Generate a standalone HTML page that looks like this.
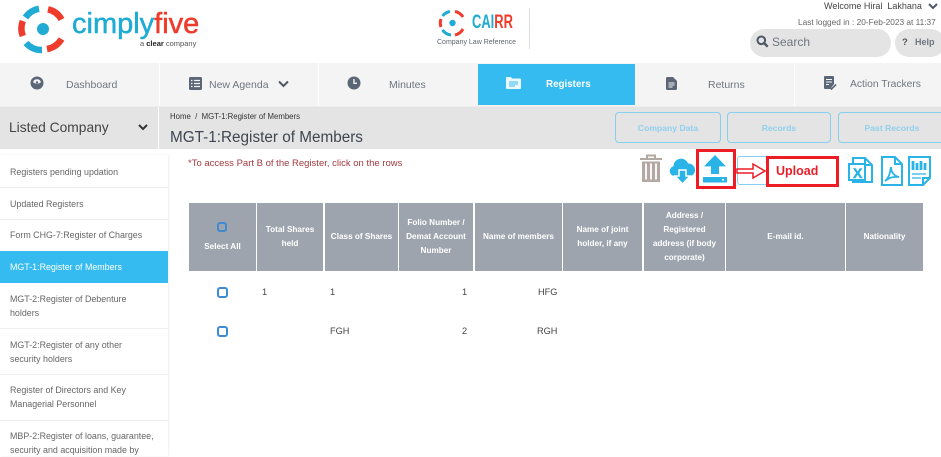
<!DOCTYPE html>
<html><head><meta charset="utf-8"><style>
html,body{margin:0;padding:0}
body{width:941px;height:456px;overflow:hidden;background:#fff;position:relative;font-family:"Liberation Sans",sans-serif;color:#555}
.a{position:absolute}
.t{position:absolute;white-space:nowrap;line-height:1}
.n{color:#6f7680;font-size:10.5px;top:79px}
.h{position:absolute;top:203px;height:68px;background:#9ea4ae;color:#fff;font-size:8.200px;font-weight:bold;line-height:14px;display:flex;align-items:center;justify-content:center;text-align:center}
.s{position:absolute;left:10px;width:156px;font-size:8.900px;line-height:14px;color:#666;white-space:nowrap}
.l{position:absolute;left:0;width:168px;height:1px;background:#f0f0f0}
.b{position:absolute;top:112px;height:29px;border:1.5px solid #86cfee;border-radius:4px;color:#8fd0ee;font-size:8.600px;font-weight:bold;display:flex;align-items:center;justify-content:center;box-sizing:content-box}
.c{position:absolute;width:7px;height:7px;border:2px solid #3f8ad0;border-radius:3px}
.d{position:absolute;font-size:9.200px;color:#444;line-height:1}
</style></head><body>
<svg class="a" style="left:17px;top:4px" width="50" height="50" viewBox="0 0 50 50" fill="none">
<circle cx="26" cy="25" r="6" fill="#1fabd4"/>
<g stroke-width="6.500">
<path d="M8.500 13.500A20.500 20.500 0 0 1 22 4.800" stroke="#1fabd4"/>
<path d="M31 5.300A20.500 20.500 0 0 1 44.500 15.500" stroke="#ee3b2b"/>
<path d="M5.800 32A21 21 0 0 1 5.800 17" stroke="#ee3b2b"/>
<path d="M9 39A21 21 0 0 0 25 46" stroke="#1fabd4"/>
<path d="M30 45A21 21 0 0 0 44.500 35" stroke="#ee3b2b"/>
</g></svg>
<div class="t" style="left:72px;top:10px;font-size:29px;color:#1fabd4;-webkit-text-stroke:.5px #1fabd4">cimply<span style="color:#ee3b2b;-webkit-text-stroke:.5px #ee3b2b">five</span></div>
<div class="t" style="left:140px;top:40px;font-size:7.500px;color:#555">a <b style="color:#222">clear</b> company</div>

<svg class="a" style="left:438px;top:9px" width="29" height="29" viewBox="0 0 29 29" fill="none">
<circle cx="14.500" cy="14" r="3.200" fill="#1fabd4"/>
<g stroke-width="3">
<path d="M4.500 7A12 12 0 0 1 12 2.500" stroke="#1fabd4"/>
<path d="M17 2.500A12 12 0 0 1 25 8" stroke="#ee3b2b"/>
<path d="M3 18A12 12 0 0 1 3 10" stroke="#ee3b2b"/>
<path d="M4.500 21A12 12 0 0 0 13 26" stroke="#1fabd4"/>
<path d="M17 26A12 12 0 0 0 25 20" stroke="#ee3b2b"/>
</g></svg>
<div class="t" style="left:472px;top:13px;font-size:19px;font-weight:bold;color:#1fabd4;transform:scaleX(.68);transform-origin:left">CAI<span style="color:#ee3b2b">RR</span></div>
<div class="t" style="left:437px;top:39px;font-size:7px;color:#5f6670">Company Law Reference</div>
<div class="a" style="left:529px;top:8px;width:1px;height:41px;background:#dcdcdc"></div>

<div class="t" style="left:824px;top:2px;font-size:9px;color:#444">Welcome Hiral&nbsp; Lakhana</div>
<svg class="a" style="left:928px;top:3px" width="10" height="7" viewBox="0 0 10 7" fill="none"><path d="M1 1l4 4 4-4" stroke="#4d5766" stroke-width="2"/></svg>
<div class="t" style="left:798px;top:18px;font-size:8.300px;color:#666">Last logged in : 20-Feb-2023 at 11:37</div>
<div class="a" style="left:750px;top:29px;width:141px;height:28px;border-radius:14px;background:#e4e4e4"></div>
<svg class="a" style="left:756px;top:35px" width="13" height="13" viewBox="0 0 13 13" fill="none"><circle cx="5.300" cy="5.300" r="3.800" stroke="#4d5766" stroke-width="2"/><path d="M8 8l3.700 3.700" stroke="#4d5766" stroke-width="2.400"/></svg>
<div class="t" style="left:772px;top:36px;font-size:12px;color:#6f7680">Search</div>
<div class="a" style="left:895px;top:29px;width:50px;height:28px;border-radius:14px;background:#e4e4e4"></div>
<div class="t" style="left:902px;top:38px;font-size:9.500px;font-weight:bold;color:#555">?</div>
<div class="t" style="left:915px;top:38px;font-size:9px;font-weight:bold;color:#6f7680">Help</div>

<div class="a" style="left:0;top:63px;width:941px;height:43px;background:#f4f4f4"></div>
<div class="a" style="left:0;top:106px;width:941px;height:1px;background:#ededed"></div>
<div class="a" style="left:159px;top:63px;width:1px;height:43px;background:#fff"></div>
<div class="a" style="left:318px;top:63px;width:1px;height:43px;background:#fff"></div>
<div class="a" style="left:794px;top:63px;width:1px;height:43px;background:#fff"></div>
<div class="a" style="left:478px;top:64px;width:157px;height:41px;background:#35bbf0"></div>

<svg class="a" style="left:30px;top:76px" width="14" height="14" viewBox="0 0 14 14"><circle cx="7" cy="7" r="6.500" fill="#5b6676"/><path d="M3 8.500a4.500 4.500 0 0 0 8 0z" fill="#5b6676"/><path d="M3 6a4.300 4.300 0 0 1 8 0a4 4 0 0 1-2.500 1.500L7 8l-1.500-.5A4 4 0 0 1 3 6z" fill="#f4f4f4"/><circle cx="7" cy="6.500" r="1.200" fill="#5b6676"/></svg>
<div class="t n" style="left:66px;top:80px">Dashboard</div>
<svg class="a" style="left:189px;top:77px" width="13" height="13" viewBox="0 0 13 13"><rect width="13" height="13" rx="1.500" fill="#5b6676"/><path d="M2 3.500h1.500M5 3.500h6M2 6.500h1.500M5 6.500h6M2 9.500h1.500M5 9.500h6" stroke="#f4f4f4" stroke-width="1.300"/></svg>
<div class="t n" style="left:209px;top:80px">New Agenda</div>
<svg class="a" style="left:278px;top:80px" width="11" height="8" viewBox="0 0 11 8" fill="none"><path d="M1 1.500l4.500 4.500 4.500-4.500" stroke="#4d5766" stroke-width="2"/></svg>
<svg class="a" style="left:347px;top:76px" width="14" height="14" viewBox="0 0 14 14"><circle cx="7" cy="7" r="6.500" fill="#5b6676"/><path d="M7 3v4.300h3" stroke="#f4f4f4" stroke-width="1.400" fill="none"/></svg>
<div class="t n" style="left:389px;top:80px">Minutes</div>
<svg class="a" style="left:506px;top:76px" width="15" height="14" viewBox="0 0 15 14"><path d="M0 2a1 1 0 0 1 1-1h4l1 1.500h8a1 1 0 0 1 1 1V12a1 1 0 0 1-1 1H1a1 1 0 0 1-1-1z" fill="#eaf8fe"/><path d="M3 6h9M3 8h9M3 10h6" stroke="#35bbf0" stroke-width="1"/></svg>
<div class="t n" style="left:546px;top:80px;color:#fff;font-weight:bold;font-size:9.800px">Registers</div>
<svg class="a" style="left:666px;top:77px" width="11" height="13" viewBox="0 0 11 13"><path d="M1.500 0H7l4 4v7.500a1.500 1.500 0 0 1-1.500 1.500h-8A1.500 1.500 0 0 1 0 11.500v-10A1.500 1.500 0 0 1 1.500 0z" fill="#5b6676"/><path d="M2.500 6h6M2.500 8h6M2.500 10h4" stroke="#f4f4f4"/></svg>
<div class="t n" style="left:708px;top:80px">Returns</div>
<svg class="a" style="left:823px;top:76px" width="14" height="15" viewBox="0 0 14 15"><path d="M1 1a1 1 0 0 1 1-1h8a1 1 0 0 1 1 1v7l-4 5H2a1 1 0 0 1-1-1z" fill="#5b6676"/><path d="M3 3.500h6M3 6h6M3 8.500h3" stroke="#f4f4f4"/><path d="M6.500 11l2 2 4.500-4.500" stroke="#5b6676" stroke-width="1.600" fill="none"/></svg>
<div class="t n" style="left:850px;top:80px;font-size:10.300px">Action Trackers</div>

<div class="a" style="left:0;top:107px;width:158px;height:42px;background:#e4e4e4"></div>
<div class="a" style="left:159px;top:107px;width:782px;height:42px;background:#e4e4e4"></div>
<div class="t" style="left:9px;top:121px;font-size:13.800px;color:#444">Listed Company</div>
<svg class="a" style="left:138px;top:124px" width="10" height="7" viewBox="0 0 10 7" fill="none"><path d="M1 1l4 4 4-4" stroke="#333" stroke-width="2"/></svg>
<div class="t" style="left:170px;top:113px;font-size:7.800px;color:#333">Home &nbsp;/&nbsp; MGT-1:Register of Members</div>
<div class="t" style="left:170px;top:130px;font-size:15.300px;color:#3f4650">MGT-1:Register of Members</div>
<div class="b" style="left:615px;width:104px">Company Data</div>
<div class="b" style="left:727px;width:102px">Records</div>
<div class="b" style="left:838px;width:106px">Past Records</div>

<div class="a" style="left:0;top:155px;width:168px;height:301px;box-shadow:1px 0 2px #eee"></div>
<div class="s" style="top:165px">Registers pending updation</div><div class="l" style="top:187px"></div>
<div class="s" style="top:197px">Updated Registers</div><div class="l" style="top:219px"></div>
<div class="s" style="top:228px">Form CHG-7:Register of Charges</div>
<div class="a" style="left:0;top:251px;width:168px;height:32px;background:#35bbf0"></div>
<div class="s" style="top:260px;color:#fff">MGT-1:Register of Members</div>
<div class="s" style="top:292px">MGT-2:Register of Debenture<br>holders</div><div class="l" style="top:328px"></div>
<div class="s" style="top:338px">MGT-2:Register of any other<br>security holders</div><div class="l" style="top:374px"></div>
<div class="s" style="top:383px">Register of Directors and Key<br>Managerial Personnel</div><div class="l" style="top:420px"></div>
<div class="s" style="top:429px">MBP-2:Register of loans, guarantee,<br>security and acquisition made by</div>

<div class="t" style="left:188px;top:159px;font-size:9.500px;color:#a33a3f">*To access Part B of the Register, click on the rows</div>

<svg class="a" style="left:639px;top:154px" width="24" height="29" viewBox="0 0 24 29" fill="none" stroke="#b4a8a2"><path d="M1 5h22M8 4V1.500h8V4" stroke-width="2"/><path d="M3 7.500h18V28H3z" fill="#b4a8a2" stroke="none"/><path d="M7 9.500v16M12 9.500v16M17 9.500v16" stroke="#fff" stroke-width="1.800"/></svg>
<svg class="a" style="left:669px;top:157px" width="28" height="28" viewBox="0 0 28 28"><path d="M5 19a5 5 0 0 1-.500-9.800A7.500 7.500 0 0 1 19 6.500 6.500 6.500 0 0 1 22 19z" fill="#29b3e6"/><path d="M10 13h7v6h4l-7.500 8L6 19h4z" fill="#29b3e6" stroke="#fff" stroke-width="1.500"/></svg>
<div class="a" style="left:737px;top:156px;width:60px;height:27px;border:1.500px solid #86cfee;border-radius:3px"></div>
<div class="a" style="left:696px;top:149px;width:34px;height:34px;border:3px solid #ee1c25;background:#fff"></div>
<svg class="a" style="left:702px;top:155px" width="26" height="28" viewBox="0 0 26 28"><path d="M13 0l11 12h-7v8H9v-8H2z" fill="#29b3e6" transform="scale(1,.95)"/><rect x="1" y="22" width="24" height="5.500" fill="#29b3e6"/><rect x="20" y="24" width="2" height="1.500" fill="#fff"/></svg>
<svg class="a" style="left:736px;top:162px" width="32" height="18" viewBox="0 0 32 18"><path d="M1 7h16V2l12 7-12 7v-5H1z" fill="#fff" stroke="#ee1c25" stroke-width="1.500"/></svg>
<div class="a" style="left:766px;top:156px;width:67px;height:25px;border:3px solid #ee1c25;background:#fff"></div>
<div class="t" style="left:776px;top:165px;font-size:12.500px;font-weight:bold;color:#e8202a">Upload</div>

<svg class="a" style="left:848px;top:156px" width="27" height="30" viewBox="0 0 27 30" fill="none" stroke="#29b3e6" stroke-width="2"><path d="M5 8V2h12l7 7v17H5v-3"/><path d="M17 2v7h7"/><rect x="1" y="8" width="16" height="16" fill="#fff"/></svg>
<div class="t" style="left:853px;top:166px;font-size:14px;font-weight:bold;color:#29b3e6;-webkit-text-stroke:.5px #29b3e6">X</div>
<svg class="a" style="left:880px;top:156px" width="23" height="30" viewBox="0 0 23 30" fill="none" stroke="#29b3e6" stroke-width="2"><path d="M2 1h13l7 7v21H2z"/><path d="M15 1v7h7"/><path d="M5 25c4-3 5-8 6-14 0 5 3 9 8 10-5-.500-9 0-14 4z" stroke-width="1.800"/></svg>
<svg class="a" style="left:908px;top:156px" width="23" height="30" viewBox="0 0 23 30" fill="none" stroke="#29b3e6" stroke-width="2"><path d="M1 1h21v21l-7 7H1z"/><path d="M15 29v-7h7"/><path d="M5 5v9M9 7v7M13 5v9M17 7v7" stroke-width="2.800"/><path d="M4 18h14M4 22h9" stroke-width="1.300"/></svg>

<div class="h" style="left:189px;width:67px;padding-top:20px;box-sizing:border-box">Select All</div>
<div class="h" style="left:257px;width:66px">Total Shares<br>held</div>
<div class="h" style="left:325px;width:73px">Class of Shares</div>
<div class="h" style="left:399px;width:74px">Folio Number /<br>Demat Account<br>Number</div>
<div class="h" style="left:475px;width:87px">Name of members</div>
<div class="h" style="left:563px;width:79px">Name of joint<br>holder, if any</div>
<div class="h" style="left:644px;width:81px">Address /<br>Registered<br>address (if body<br>corporate)</div>
<div class="h" style="left:726px;width:119px">E-mail id.</div>
<div class="h" style="left:846px;width:77px">Nationality</div>
<div class="c" style="left:217px;top:222px;width:6px;height:6px"></div>
<div class="c" style="left:217px;top:287px"></div>
<div class="c" style="left:217px;top:326px"></div>
<div class="d" style="left:262px;top:288px">1</div>
<div class="d" style="left:330px;top:288px">1</div>
<div class="d" style="left:462px;top:288px">1</div>
<div class="d" style="left:538px;top:288px">HFG</div>
<div class="d" style="left:330px;top:327px">FGH</div>
<div class="d" style="left:462px;top:327px">2</div>
<div class="d" style="left:537px;top:327px">RGH</div>
</body></html>
